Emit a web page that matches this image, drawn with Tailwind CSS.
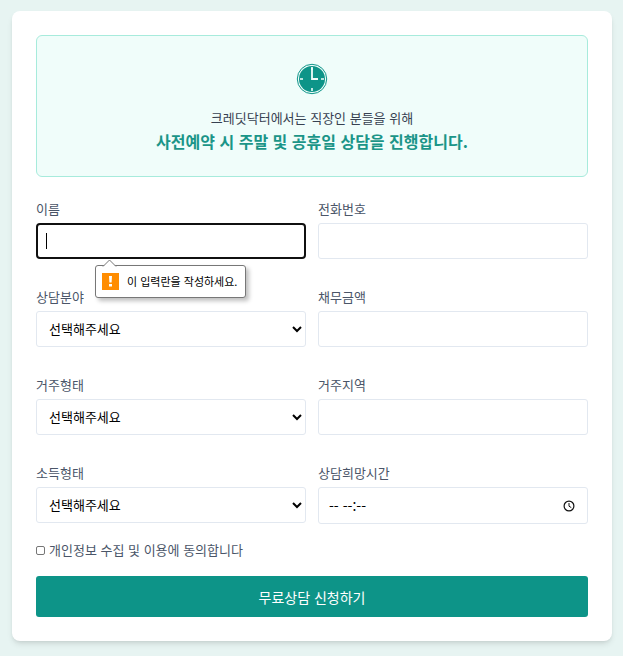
<!DOCTYPE html>
<html lang="ko">
<head>
<meta charset="utf-8">
<meta name="viewport" content="width=device-width, initial-scale=1">
<title>무료상담 신청</title>
<script src="https://cdn.jsdelivr.net/npm/@tailwindcss/browser@4"></script>
</head>
<body class="min-h-screen bg-[#e7f4f2] pt-[11px] pr-[11px] pb-4 pl-3 font-['Noto_Sans_CJK_KR',sans-serif] text-[13px] text-[#4a5568]">
<main class="mx-auto w-full max-w-[600px] rounded-lg bg-white p-6 shadow-md">
  <section class="mb-6 rounded-md border border-[#a7ebdc] bg-[#f0fdfa] px-6 pt-6 pb-[22px] text-center">
    <svg class="mx-auto mb-3 size-9" viewBox="0 0 36 36" fill="none" aria-hidden="true">
      <circle cx="18" cy="19" r="14.7" stroke="#0d9488"/>
      <circle cx="18" cy="19" r="13" fill="#0d9488"/>
      <path d="M18 7.500v11.500h6" stroke="#effdfa" stroke-width="1.8"/>
      <path d="M6 19h3M27 19h3M18 28v3M18 7v3" stroke="#effdfa" stroke-width="1.6"/>
    </svg>
    <p class="leading-5 text-[#374151]">크레딧닥터에서는 직장인 분들을 위해</p>
    <p class="text-base leading-[26px] font-bold text-[#1b9588]">사전예약 시 주말 및 공휴일 상담을 진행합니다.</p>
  </section>
  <form>
    <div class="grid grid-cols-2 gap-x-3 gap-y-[30px]">
      <div class="relative">
        <label for="name" class="mb-1.5 block leading-4">이름</label>
        <input id="name" type="text" class="block h-9 w-full rounded border-2 border-[#101010] bg-white px-2 text-black outline-none">
        <span class="absolute top-8 left-[10px] h-4 w-px bg-black"></span>
        <div role="alert" class="absolute top-16 left-[59px] z-10 flex h-[33px] items-center gap-2 rounded-[3px] border border-[#777] bg-white pr-2 pl-1.5 text-[11px] whitespace-nowrap text-black shadow-[3px_3px_4px_rgba(0,0,0,0.25)]">
          <svg class="absolute -top-[7px] left-[6px] h-2 w-4" viewBox="0 0 16 8" aria-hidden="true"><path d="M1 7.500 7.500 1 14 7.500V8H1z" fill="#fff"/><path d="M1 7.500 7.500 1 14 7.500" fill="none" stroke="#777"/></svg>
          <svg class="size-[17px]" viewBox="0 0 17 17" aria-hidden="true"><path fill="#ff8c00" d="M0 0h17v17H0z"/><path fill="#fff" d="M7 3h3l-.4 6.500H7.400zM7 11h3v2.500H7z"/></svg>
          <span>이 입력란을 작성하세요.</span>
        </div>
      </div>
      <div>
        <label for="phone" class="mb-1.5 block leading-4">전화번호</label>
        <input id="phone" type="tel" class="block h-9 w-full rounded-[3px] border border-[#e2e8f0] bg-white px-2">
      </div>
      <div>
        <label for="field" class="mb-1.5 block leading-4">상담분야</label>
        <select id="field" class="block h-9 w-full rounded-[3px] border border-[#e2e8f0] bg-white pr-[9px] pb-0.5 pl-2 text-black"><option>선택해주세요</option></select>
      </div>
      <div>
        <label for="debt" class="mb-1.5 block leading-4">채무금액</label>
        <input id="debt" type="text" class="block h-9 w-full rounded-[3px] border border-[#e2e8f0] bg-white px-2">
      </div>
      <div>
        <label for="housing" class="mb-1.5 block leading-4">거주형태</label>
        <select id="housing" class="block h-9 w-full rounded-[3px] border border-[#e2e8f0] bg-white pr-[9px] pb-0.5 pl-2 text-black"><option>선택해주세요</option></select>
      </div>
      <div>
        <label for="region" class="mb-1.5 block leading-4">거주지역</label>
        <input id="region" type="text" class="block h-9 w-full rounded-[3px] border border-[#e2e8f0] bg-white px-2">
      </div>
      <div>
        <label for="income" class="mb-1.5 block leading-4">소득형태</label>
        <select id="income" class="block h-9 w-full rounded-[3px] border border-[#e2e8f0] bg-white pr-[9px] pb-0.5 pl-2 text-black"><option>선택해주세요</option></select>
      </div>
      <div>
        <label for="time" class="mb-1.5 block leading-4">상담희망시간</label>
        <div class="flex h-[37px] items-center rounded-[3px] border border-[#e2e8f0] bg-white pr-3 pl-[10px]">
          <input id="time" type="text" value="-- --:--" class="w-full min-w-0 flex-1 text-sm text-black outline-none">
          <button type="button" aria-label="시간 선택" class="shrink-0"><svg class="size-3" viewBox="0 0 12 12" fill="none" stroke="#111" aria-hidden="true"><circle cx="6" cy="6" r="4.900" stroke-width="1.200"/><path d="M6 3v3.200l2.300 1.400"/></svg></button>
        </div>
      </div>
    </div>
    <div class="mt-4 flex items-center gap-1 leading-5">
      <input id="agree" type="checkbox" class="size-[9px] appearance-none rounded-[2px] border border-[#767676] bg-white checked:bg-[#0d9488]">
      <label for="agree">개인정보 수집 및 이용에 동의합니다</label>
    </div>
    <button type="submit" class="mt-4 block h-[41px] w-full rounded-[3px] bg-[#0d9488] text-sm text-white">무료상담 신청하기</button>
  </form>
</main>
</body>
</html>
